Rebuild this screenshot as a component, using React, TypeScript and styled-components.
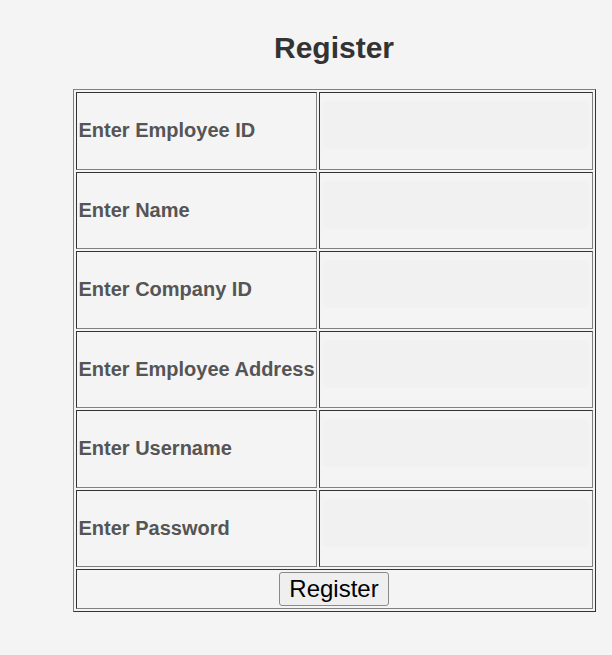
import React from "react"
import styled, { createGlobalStyle } from "styled-components"

const GlobalStyle = createGlobalStyle`
  html, body {
    margin: 0;
    padding: 0;
    background: #f4f4f4;
  }
  body {
    font-family: "Liberation Sans", Arial, sans-serif;
  }
`

const Page = styled.div`
  padding: 31px 0 40px 56px;
  text-align: center;
`

const Title = styled.h2`
  margin: 0 0 24px;
  font-size: 30px;
  font-weight: bold;
  color: #333;
`

const Table = styled.table`
  margin: 0 auto;
  width: 523px;
  border-collapse: separate;
  border-spacing: 2px;
  border: 1px solid;
  border-color: #808080 #333 #333 #808080;
`

const Cell = styled.td<{ $label?: boolean }>`
  padding: ${({ $label }) => ($label ? "1px 1px 1px 2px" : "1px")};
  border: 1px solid;
  border-color: #333 #808080 #808080 #333;
  vertical-align: middle;
  text-align: ${({ $label }) => ($label ? "left" : "center")};
  width: ${({ $label }) => ($label ? "1%" : "auto")};
  font-size: 20px;
  font-weight: bold;
  color: #555;
  white-space: nowrap;
`

const Field = styled.input`
  display: block;
  box-sizing: border-box;
  width: calc(100% - 3px);
  height: 48px;
  margin: 7px 2px 18.5px 1px;
  border: none;
  border-radius: 5px;
  background: #f1f1f1;
  outline: none;
`

const SubmitButton = styled.button`
  display: inline-block;
  margin: 1px 0;
  padding: 1px 9px;
  height: 34px;
  font-family: "Liberation Sans", Arial, sans-serif;
  font-size: 24px;
  color: #000;
  background: #efefef;
  border: 1px solid #8a8a8a;
  border-radius: 3px;
  vertical-align: top;
`

const fields = [
  { label: "Enter Employee ID", type: "text" },
  { label: "Enter Name", type: "text" },
  { label: "Enter Company ID", type: "text" },
  { label: "Enter Employee Address", type: "text" },
  { label: "Enter Username", type: "text" },
  { label: "Enter Password", type: "password" },
]

const App: React.FC = () => {
  return (
    <Page>
      <GlobalStyle />
      <Title>Register</Title>
      <form onSubmit={(e) => e.preventDefault()}>
        <Table>
          <tbody>
            {fields.map((f) => (
              <tr key={f.label}>
                <Cell $label>{f.label}</Cell>
                <Cell>
                  <Field type={f.type} />
                </Cell>
              </tr>
            ))}
            <tr>
              <Cell colSpan={2}>
                <SubmitButton type="submit">Register</SubmitButton>
              </Cell>
            </tr>
          </tbody>
        </Table>
      </form>
    </Page>
  )
}

export default App
